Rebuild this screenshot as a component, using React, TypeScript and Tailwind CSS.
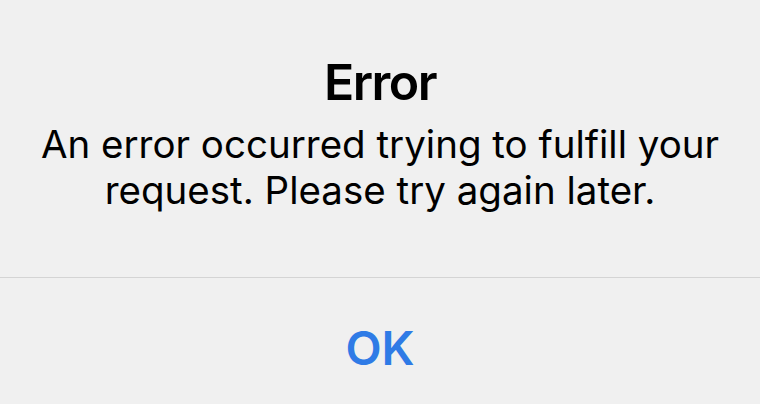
export default function App() {
  return (
    <div className="w-[760px] h-[404px] bg-[#f0f0f0] flex flex-col overflow-hidden" style={{ fontFamily: "Inter, 'Noto Sans', sans-serif" }}>
      <div className="h-[277px] flex flex-col items-center pt-[52px]">
        <div className="text-[50px] leading-[60px] font-semibold text-black tracking-[-1.5px]">Error</div>
        <div className="text-[38.5px] leading-[46px] text-black text-center mt-[9px]">
          An error occurred trying to fulfill your<br />request. Please try again later.
        </div>
      </div>
      <div className="h-px bg-[#d4d4d4]" />
      <div className="flex-1 flex items-center justify-center pt-[12px]">
        <div className="text-[47px] font-semibold text-[#2f7be6] leading-none">OK</div>
      </div>
    </div>
  );
}
